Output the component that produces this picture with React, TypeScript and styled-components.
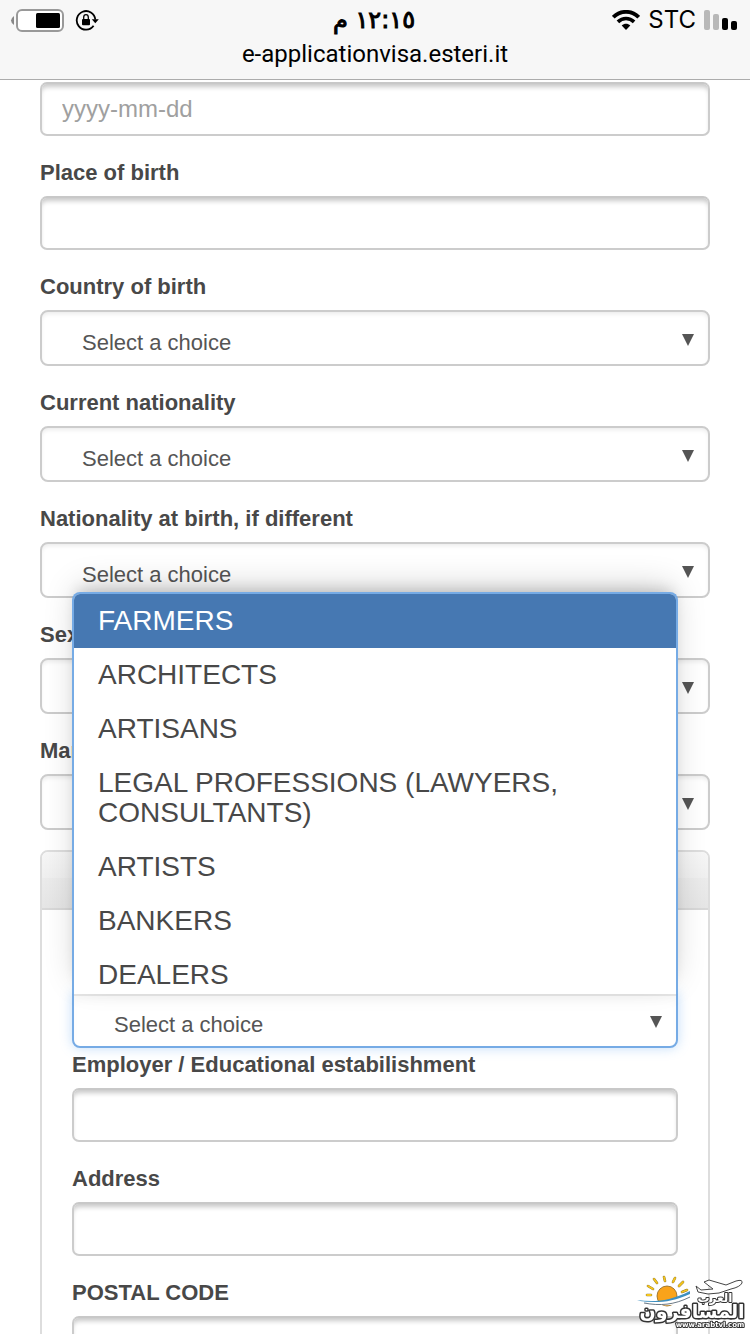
import React from "react";
import styled, { createGlobalStyle, css } from "styled-components";

const GlobalStyle = createGlobalStyle`
  *, *::before, *::after { box-sizing: border-box; }
  body {
    margin: 0;
    background: #fff;
    color: #484848;
    font-family: "Liberation Sans", Arial, sans-serif;
  }
`;

const Screen = styled.div`
  display: flex;
  flex-direction: column;
  height: 100vh;
  overflow: hidden;
`;

const BrowserBar = styled.header`
  flex: none;
  position: relative;
  z-index: 5;
  height: 80px;
  background: #f7f7f7;
  border-bottom: 1px solid #acacac;
  color: #000;
  font: 24px/28px Roboto, Inter, sans-serif;
`;

const StatusRow = styled.div`
  display: grid;
  grid-template-columns: 1fr auto 1fr;
  align-items: center;
  height: 40px;
  padding: 0 12px 0 10px;
`;

const StatusGroup = styled.div<{ $end?: boolean }>`
  display: flex;
  align-items: center;
  gap: ${(p) => (p.$end ? 8 : 10)}px;
  justify-content: ${(p) => (p.$end ? "flex-end" : "flex-start")};
`;

const Carrier = styled.span`
  font-family: Inter, sans-serif;
`;

const Clock = styled.time`
  font: 24px/28px "DejaVu Sans", sans-serif;
  -webkit-text-stroke: 1px #000;
`;

const Address = styled.div`
  text-align: center;
`;

const Form = styled.form`
  flex: 1;
  min-height: 0;
  overflow: hidden;
  padding: 2px 40px 0;
`;

const Fields = styled.div`
  display: flex;
  flex-direction: column;
  gap: 22px;
`;

const FieldBox = styled.div<{ $tight?: boolean }>`
  display: flex;
  flex-direction: column;
  gap: 8px;
  margin-bottom: ${(p) => (p.$tight ? -20 : 0)}px;
`;

const Label = styled.label`
  font-size: 22px;
  line-height: 30px;
  font-weight: bold;
`;

const control = css`
  display: block;
  width: 100%;
  margin: 0;
  background: #fff;
  border: 2px solid #ccc;
  outline: none;
  font: 22px/28px "Liberation Sans", Arial, sans-serif;
`;

const Input = styled.input`
  ${control}
  height: 54px;
  padding: 0 20px;
  border-radius: 7px;
  border-top-color: #c8c8c8;
  box-shadow: inset 0 5px 5px -2px rgba(0, 0, 0, 0.22);
  color: #484848;
  font-size: 24px;
  &::placeholder {
    color: #a0a0a0;
    opacity: 1;
  }
`;

const SelectBox = styled.div`
  position: relative;
`;

const Select = styled.select<{ $open?: boolean }>`
  ${control}
  appearance: none;
  height: 56px;
  padding: 10px 40px 0;
  border-radius: 8px;
  box-shadow: inset 0 3px 4px -1px rgba(0, 0, 0, 0.08);
  color: #555;
  ${(p) =>
    p.$open &&
    css`
      border-color: #76abe5;
      border-radius: 0 0 8px 8px;
      box-shadow: inset 0 2px 0 #e6e6e6, inset 0 8px 8px -2px rgba(0, 0, 0, 0.03),
        0 0 12px rgba(102, 170, 240, 0.4);
    `}
`;

const Arrow = styled.svg`
  position: absolute;
  right: 16px;
  top: 24px;
  pointer-events: none;
`;

const Options = styled.ul`
  position: absolute;
  z-index: 2;
  left: 0;
  right: 0;
  bottom: 54px;
  height: 402px;
  margin: 0;
  padding: 0;
  list-style: none;
  overflow: hidden;
  background: #fff;
  border: 2px solid #76abe5;
  border-bottom: 0;
  border-radius: 8px 8px 0 0;
  box-shadow: 0 -8px 14px -6px rgba(0, 0, 0, 0.16), 0 -10px 34px -6px rgba(0, 0, 0, 0.2);
`;

const Option = styled.li<{ $active?: boolean }>`
  padding: 12px 80px 12px 24px;
  font-size: 28px;
  line-height: 30px;
  background: ${(p) => (p.$active ? "#4678b2" : "#fff")};
  color: ${(p) => (p.$active ? "#fff" : "#484848")};
`;

const Panel = styled.section`
  margin-top: 20px;
  border: 2px solid #ddd;
  border-radius: 8px;
`;

const PanelHead = styled.div`
  height: 58px;
  border-bottom: 2px solid #d8d8d8;
  border-radius: 6px 6px 0 0;
  background: linear-gradient(#f6f6f6, #efefef 46%, #ebebeb 46%, #e5e5e5);
`;

const PanelBody = styled.div`
  padding: 82px 30px 30px;
`;

const Watermark = styled.svg`
  position: fixed;
  right: 4px;
  bottom: 2px;
  z-index: 6;
`;

type TextFieldProps = { id: string; label?: string; name?: string; placeholder?: string };

function TextField({ id, label, name, placeholder }: TextFieldProps) {
  return (
    <FieldBox>
      {label && <Label htmlFor={id}>{label}</Label>}
      <Input id={id} type="text" placeholder={placeholder} aria-label={name} />
    </FieldBox>
  );
}

type SelectFieldProps = { id: string; label?: string; name?: string; options?: string[] };

function SelectField({ id, label, name, options }: SelectFieldProps) {
  const open = Boolean(options);
  return (
    <FieldBox $tight={open}>
      {label && <Label htmlFor={id}>{label}</Label>}
      <SelectBox>
        <Select id={id} $open={open} aria-label={name}>
          <option>Select a choice</option>
        </Select>
        <Arrow width="12" height="12" viewBox="0 0 12 12" aria-hidden="true">
          <path d="M0 0h12L6 12z" fill="#555" />
        </Arrow>
        {options && (
          <Options role="listbox" aria-label={name}>
            {options.map((text, i) => (
              <Option key={text} role="option" aria-selected={i === 0} $active={i === 0}>
                {text}
              </Option>
            ))}
          </Options>
        )}
      </SelectBox>
    </FieldBox>
  );
}

function Battery() {
  return (
    <svg width="55" height="24" viewBox="0 0 55 24" aria-hidden="true">
      <path d="M4 8v9Q-2 12.500 4 8z" fill="#888" />
      <rect x="7" y="2" width="46" height="21" rx="5" fill="#fff" stroke="#999" strokeWidth="2" />
      <rect x="26" y="5" width="24" height="15" rx="1.500" fill="#000" />
    </svg>
  );
}

function RotationLock() {
  return (
    <svg width="24" height="24" viewBox="0 0 24 24" fill="none" aria-hidden="true">
      <path d="M18.600 17.800A9.300 9.300 0 1 1 20.300 11.500" stroke="#000" strokeWidth="1.800" />
      <path d="M16.800 11.200h7l-3.500 4z" fill="#000" />
      <rect x="7" y="11" width="8" height="6.200" rx="1" fill="#000" />
      <path d="M8.700 11.500V9.300a2.300 2.700 0 0 1 4.600 0v2.200" stroke="#000" strokeWidth="1.300" />
    </svg>
  );
}

function Wifi() {
  return (
    <svg width="28" height="20" viewBox="0 0 28 20" fill="none" aria-hidden="true">
      <path d="M1.300 7.200C8.500 0 19.500 0 26.700 7.200" stroke="#000" strokeWidth="3.800" />
      <path d="M5.900 11.900c4.600-4.500 11.600-4.500 16.200 0" stroke="#000" strokeWidth="3.600" />
      <path d="M9.700 15.500c2.500-2.300 6.100-2.300 8.600 0L14 20z" fill="#000" />
    </svg>
  );
}

function Signal() {
  return (
    <svg width="34" height="20" viewBox="0 0 34 20" aria-hidden="true">
      <rect x="0" y="0" width="6" height="20" rx="2" fill="#b8b8b8" />
      <rect x="9" y="4" width="6" height="16" rx="2" fill="#b8b8b8" />
      <rect x="18" y="8" width="6" height="12" rx="2" fill="#000" />
      <rect x="27" y="11" width="6" height="9" rx="2" fill="#000" />
    </svg>
  );
}

function SiteMark() {
  const outline = {
    fill: "#fff",
    stroke: "#333",
    paintOrder: "stroke",
    strokeLinejoin: "round" as const,
    fontFamily: '"DejaVu Sans", sans-serif',
    fontWeight: "bold",
    textAnchor: "middle" as const,
  };
  const rays = "M17 15l-5-3M21 9l-3-4M29 7l-1-4M37 8l2-4M43 12l4-4M46 18l5-2M15 21h-4";
  return (
    <Watermark width="110" height="58" viewBox="0 0 110 58" role="img" aria-label="www.arabtvl.com">
      <path d={rays} stroke="#8a7436" strokeWidth="2.600" strokeLinecap="round" />
      <path d={rays} stroke="#f5c61c" strokeWidth="1.800" strokeLinecap="round" />
      <circle cx="31" cy="22" r="10" fill="#f9a31a" stroke="#8a6420" strokeWidth=".8" />
      <path d="M1 26C17 28 32 28 54 17v5C36 32 16 31 1 26z" fill="#3d8fc0" />
      <path d="M3 27C19 29 35 29 54 20v7C33 34 17 31 3 27z" fill="#fff" />
      <path d="M8 29C24 32 38 31 54 23" fill="none" stroke="#456" strokeWidth=".8" />
      <path
        d="M60 12l5 4 12-1-9-7 5-2 17 5 10-4q7-2 6 2-2 4-11 6l-12 4-11 1-10-2z"
        fill="#fff"
        stroke="#444"
      />
      <text x="56" y="44" fontSize="19" strokeWidth="3" direction="rtl" {...outline}>المسافرون</text>
      <text x="79" y="28" fontSize="12" strokeWidth="2" direction="rtl" {...outline}>العرب</text>
      <text x="74" y="53" fontSize="7" strokeWidth="2" {...outline}>www.arabtvl.com</text>
    </Watermark>
  );
}

const occupations = [
  "FARMERS",
  "ARCHITECTS",
  "ARTISANS",
  "LEGAL PROFESSIONS (LAWYERS, CONSULTANTS)",
  "ARTISTS",
  "BANKERS",
  "DEALERS",
];

export default function App() {
  return (
    <Screen>
      <GlobalStyle />
      <BrowserBar>
        <StatusRow>
          <StatusGroup>
            <Battery />
            <RotationLock />
          </StatusGroup>
          <Clock dir="rtl" lang="ar">١٢:١٥ م</Clock>
          <StatusGroup $end>
            <Wifi />
            <Carrier>STC</Carrier>
            <Signal />
          </StatusGroup>
        </StatusRow>
        <Address>e-applicationvisa.esteri.it</Address>
      </BrowserBar>
      <Form>
        <Fields>
          <TextField id="birth-date" name="Date of birth" placeholder="yyyy-mm-dd" />
          <TextField id="birth-place" label="Place of birth" />
          <SelectField id="birth-country" label="Country of birth" />
          <SelectField id="nationality" label="Current nationality" />
          <SelectField id="birth-nationality" label="Nationality at birth, if different" />
          <SelectField id="sex" label="Sex" />
          <SelectField id="marital" label="Marital status" />
        </Fields>
        <Panel>
          <PanelHead />
          <PanelBody>
            <Fields>
              <SelectField id="occupation" name="Current occupation" options={occupations} />
              <TextField id="employer" label="Employer / Educational estabilishment" />
              <TextField id="address" label="Address" />
              <TextField id="postal" label="POSTAL CODE" />
            </Fields>
          </PanelBody>
        </Panel>
      </Form>
      <SiteMark />
    </Screen>
  );
}
